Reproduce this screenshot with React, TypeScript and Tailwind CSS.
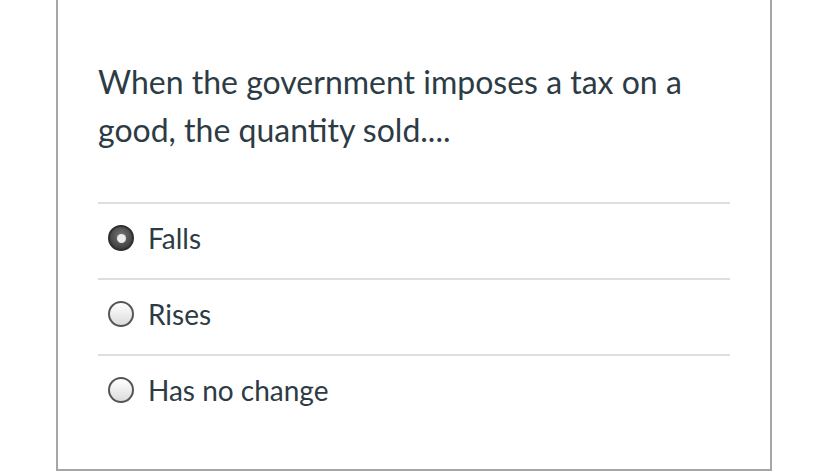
import React, { useState } from 'react';

const options = ['Falls', 'Rises', 'Has no change'];

const Radio: React.FC<{ checked: boolean }> = ({ checked }) => {
    if (checked) {
        return (
            <span className="flex h-[26px] w-[26px] shrink-0 items-center justify-center rounded-full border-2 border-[#2f2f2f] bg-[radial-gradient(circle_at_50%_40%,#777777,#2c2c2c)]">
                <span className="h-[9px] w-[9px] rounded-full bg-[#ececec]" />
            </span>
        );
    }
    return (
        <span className="h-[26px] w-[26px] shrink-0 rounded-full border-2 border-[#565656] bg-[linear-gradient(180deg,#ffffff,#dcdcdc)]" />
    );
};

const App: React.FC = () => {
    const [selected, setSelected] = useState(0);

    return (
        <div className="h-[473px] w-[820px] overflow-hidden bg-white font-['Lato','Liberation_Sans',sans-serif] text-[#2d3b45]">
            <div className="ml-[56px] h-[471px] w-[716px] border-x-2 border-b-2 border-[#a6a6a6] px-[40px] pt-[58px]">
                <p className="text-[32px] leading-[48px]">
                    When the government imposes a tax on a good, the quantity sold....
                </p>
                <div className="mt-[48px]">
                    {options.map((label, i) => (
                        <button
                            key={label}
                            onClick={() => setSelected(i)}
                            className="flex h-[76px] w-full items-center gap-[14px] border-t-2 border-[#dedede] pb-[6px] pl-[10px] text-left text-[28px]"
                        >
                            <Radio checked={selected === i} />
                            <span>{label}</span>
                        </button>
                    ))}
                </div>
            </div>
        </div>
    );
};

export default App;
